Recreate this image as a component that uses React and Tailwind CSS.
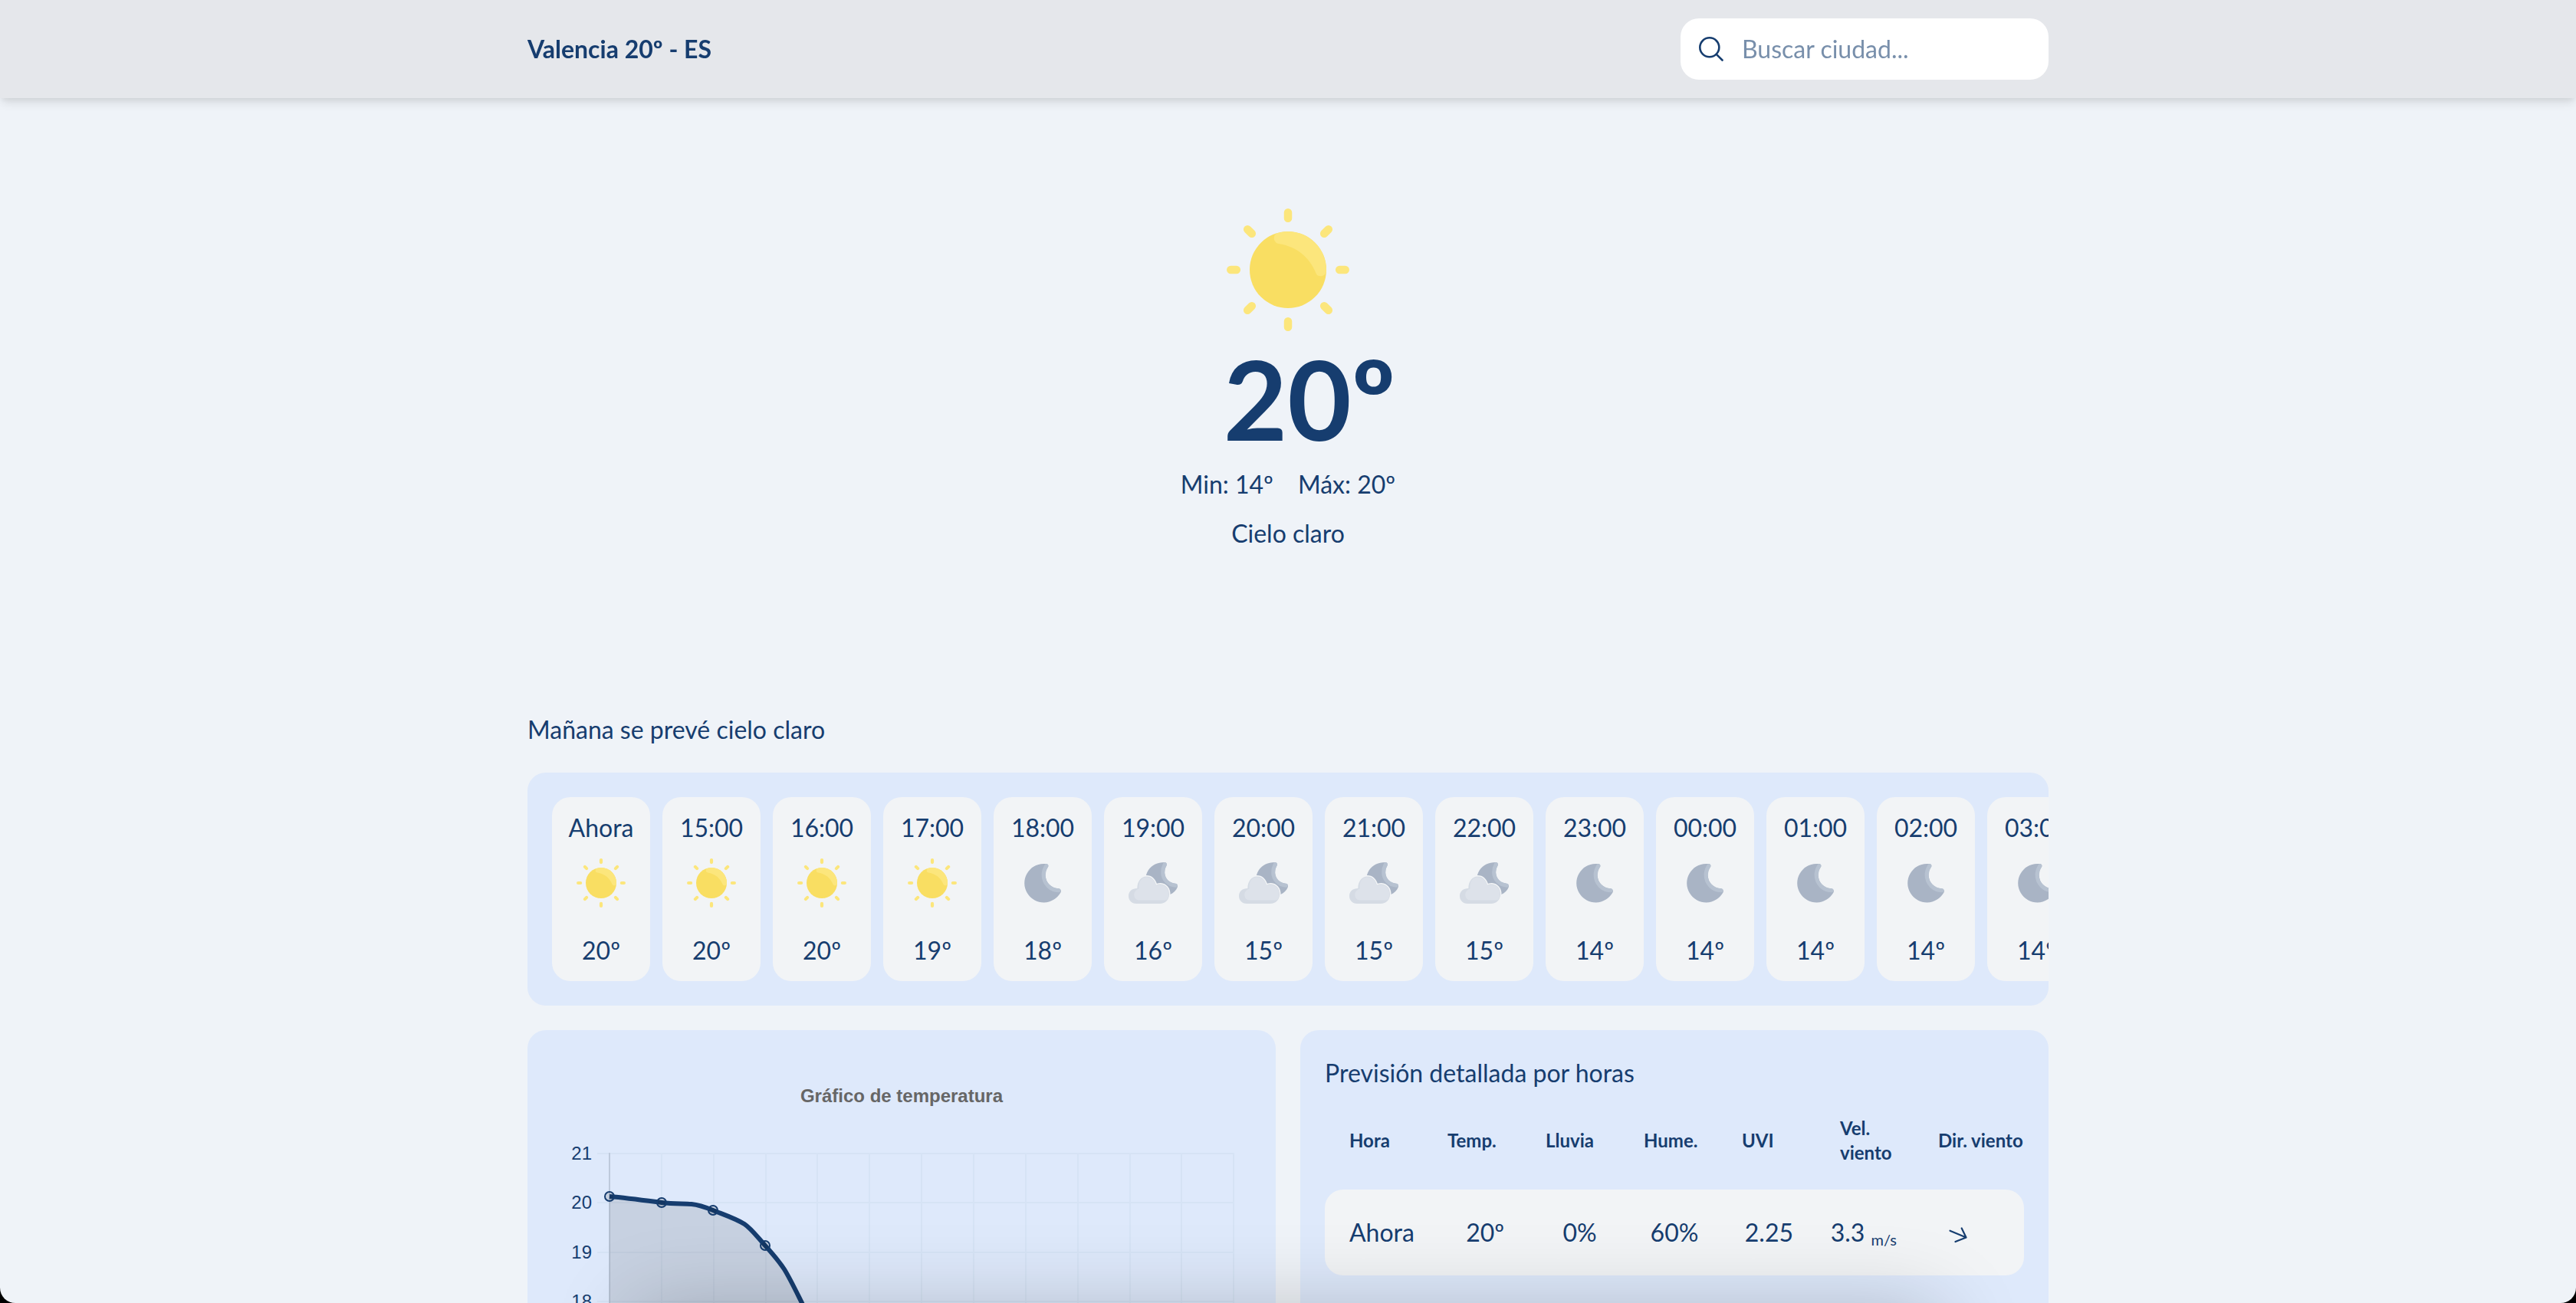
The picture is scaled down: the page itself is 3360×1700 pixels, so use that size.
import React from "react";

const hours = [
  { time: "Ahora", icon: "sun", temp: 20 },
  { time: "15:00", icon: "sun", temp: 20 },
  { time: "16:00", icon: "sun", temp: 20 },
  { time: "17:00", icon: "sun", temp: 19 },
  { time: "18:00", icon: "moon", temp: 18 },
  { time: "19:00", icon: "cloud", temp: 16 },
  { time: "20:00", icon: "cloud", temp: 15 },
  { time: "21:00", icon: "cloud", temp: 15 },
  { time: "22:00", icon: "cloud", temp: 15 },
  { time: "23:00", icon: "moon", temp: 14 },
  { time: "00:00", icon: "moon", temp: 14 },
  { time: "01:00", icon: "moon", temp: 14 },
  { time: "02:00", icon: "moon", temp: 14 },
  { time: "03:00", icon: "moon", temp: 14 },
];

function Sun({ className }) {
  return (
    <svg viewBox="0 0 160 160" className={className} aria-hidden="true">
      <g stroke="#fce67c" strokeWidth="10.5" strokeLinecap="round">
        <path d="M80 5.3V12.8M80 147.2V154.7M5.3 80H12.8M147.2 80H154.7" />
        <path d="M27.2 27.2L32.8 32.8M127.2 127.2L132.8 132.8M27.2 132.8L32.8 127.2M127.2 32.8L132.8 27.2" />
      </g>
      <circle cx="80" cy="80" r="50" fill="#f9de62" />
      <path
        d="M67.7 46C61 45 59.5 35.5 65.5 32.3A50 50 0 0 1 130 81C130 89 119 90.5 116.7 85C109 65 92 49.5 67.7 46Z"
        fill="#fce67c"
      />
    </svg>
  );
}

function Moon({ className }) {
  return (
    <svg viewBox="0 0 64 64" className={className} aria-hidden="true">
      <path
        d="M36.5 7C39 7 40.3 9.5 38.8 11.5C36.5 14.5 35.5 18 35.6 22C36 31.5 43 38.8 52 39.2C55.2 39.2 56.8 42 55.4 44.5A25.2 25.2 0 1 1 33 7Z"
        fill="#a9b4c5"
      />
      <path
        d="M36.8 9.6C34 14 33 18 33.1 22C33.5 33 42 41.4 53 41.8"
        fill="none"
        stroke="#b7c2d1"
        strokeWidth="5"
        strokeLinecap="round"
      />
    </svg>
  );
}

const cloudPath =
  "M10 59C4 59 0 54.5 0 49C0 43 4.5 39 11.3 39C11.5 30 16 23.5 23.5 23.5C30 23.5 34 28 36 35C37.5 34 39.5 33.4 42 33.6C48.5 34 53 39.5 53 46.5C53 54 48 59 41 59Z";

function MoonCloud({ className }) {
  return (
    <svg viewBox="0 0 64 64" className={className} aria-hidden="true">
      <path
        d="M46.5 5C49.5 5 50.7 7.5 49.3 10C47.6 13 46.9 16 47.1 19C47.6 26.5 53 32 60.5 32.7C63.5 33 64.6 35.3 63.7 37.8C62 42 58.5 45.5 54 47L30 44C21 36 20 24 26 15C30.5 8.5 38 5 46.5 5Z"
        fill="#a9b4c5"
      />
      <path
        d="M47.3 7.5C45 12 44.5 15.5 44.7 19C45.3 27.5 51.5 34.4 61.3 35.2"
        fill="none"
        stroke="#b7c2d1"
        strokeWidth="5"
        strokeLinecap="round"
      />
      <path d={cloudPath} fill="none" stroke="#f2f4f6" strokeWidth="3" />
      <path d={cloudPath} fill="#d5dbe4" />
      <path
        d="M14 54.5C9.5 54.5 7.3 51 7.3 47.5C7.3 43 10.5 40.5 13.5 39.5C12.5 30 17 24.5 23.5 24.5C30 24.5 34 29 36 35.5C37.5 34.8 39.5 34.4 42 34.6C48 35 52.3 39.5 52.3 46.5C52.3 49.5 51.4 52 50 54C46 54.8 43 54.5 40 54.5Z"
        fill="#dde2ea"
      />
    </svg>
  );
}

const icons = { sun: Sun, moon: Moon, cloud: MoonCloud };

const columns = Array.from({ length: 13 }, (_, i) => 75 + Math.round(i * 67.85));
const rows = [21, 20, 19, 18, 17, 16, 15, 14, 13].map((value, i) => ({
  value,
  y: 129 + Math.round(i * 64.25),
}));
const points = [
  [75, 185],
  [143, 193],
  [210, 203],
  [278, 249],
  [346, 372],
  [414, 450],
  [482, 480],
  [550, 500],
  [618, 515],
  [686, 540],
  [753, 560],
  [821, 570],
  [889, 580],
];
const curve =
  "M75 185C98 187 120 190 143 193C160 195 172 194 182 195C192 196 200 199 210 203C225 209 240 214 251 221C260 227 268 238 278 249C287 259 296 269 303 280C311 293 319 310 328 328L346 372C380 450 440 470 482 480S560 500 618 515S780 565 889 580";

function TemperatureChart() {
  return (
    <svg
      viewBox="0 0 912 680"
      className="block w-full"
      role="img"
      aria-label="Gráfico de temperatura"
      fontFamily='"Liberation Sans", Arial, sans-serif'
      fontSize="24"
    >
      <text x="456" y="62" textAnchor="middle" fontWeight="700" fill="#666666">
        Gráfico de temperatura
      </text>
      <g stroke="#d6e3f5" strokeWidth="2">
        {rows.map((row) => (
          <line key={row.value} x1="59" x2="889" y1={row.y} y2={row.y} />
        ))}
        {columns.map((x) => (
          <line key={x} x1={x} x2={x} y1="128" y2="644" />
        ))}
      </g>
      <line x1="75" x2="75" y1="128" y2="644" stroke="#becadc" strokeWidth="2" />
      {rows.map((row) => (
        <text key={row.value} x="52" y={row.y + 8} textAnchor="end" fill="#163d6f">
          {row.value}
        </text>
      ))}
      <path d={curve + "V643H75Z"} fill="#000000" fillOpacity="0.1" />
      <path d={curve} fill="none" stroke="#163d6f" strokeWidth="6" />
      {points.map(([x, y]) => (
        <circle
          key={x}
          cx={x}
          cy={y}
          r="6"
          fill="#000000"
          fillOpacity="0.1"
          stroke="#163d6f"
          strokeWidth="2"
        />
      ))}
    </svg>
  );
}

export default function App() {
  return (
    <div className="relative h-screen overflow-hidden bg-[#eff3f8] font-['Lato',sans-serif] text-[32px] leading-[48px] text-[#163d6f]">
      <div className="h-full overflow-y-auto [scrollbar-width:none]">
        <header className="sticky top-0 z-10 bg-[#e5e7eb] shadow-[0_8px_12px_-2px_rgba(0,0,0,0.1),0_4px_8px_-2px_rgba(0,0,0,0.06)]">
          <div className="mx-auto flex max-w-[2048px] items-center justify-between px-8 py-6">
            <h1 className="font-bold">Valencia 20º - ES</h1>
            <label className="flex h-20 w-[480px] items-center gap-6 rounded-3xl bg-white px-6">
              <svg viewBox="0 0 32 32" className="size-8 shrink-0" fill="none" stroke="currentColor" strokeWidth="2.6" strokeLinecap="round" aria-hidden="true">
                <circle cx="13.8" cy="13.8" r="12.5" />
                <path d="M22.8 22.8L30.5 30.5" />
              </svg>
              <input
                type="text"
                aria-label="Buscar ciudad"
                placeholder="Buscar ciudad..."
                className="w-full min-w-0 bg-transparent outline-none placeholder:text-[#788fab]"
              />
            </label>
          </div>
        </header>

        <main className="mx-auto max-w-[2048px] px-8 pb-8">
          <section className="flex flex-col items-center gap-4 pt-36 pb-52">
            <Sun className="size-40" />
            <p className="ml-14 text-[144px] leading-none font-bold">20º</p>
            <div className="flex gap-8">
              <p>Min: 14º</p>
              <p>Máx: 20º</p>
            </div>
            <p>Cielo claro</p>
          </section>

          <h2 className="mb-8">Mañana se prevé cielo claro</h2>

          <ul className="mb-8 flex gap-4 overflow-x-auto rounded-3xl bg-[#dee9fb] p-8 [scrollbar-width:none]">
            {hours.map((hour) => {
              const Icon = icons[hour.icon];
              return (
                <li key={hour.time} className="flex w-32 shrink-0 flex-col items-center rounded-3xl bg-[#f2f4f6] py-4">
                  <span>{hour.time}</span>
                  <Icon className="mt-4 mb-8 size-16" />
                  <span>{hour.temp}º</span>
                </li>
              );
            })}
          </ul>

          <div className="grid grid-cols-2 gap-8">
            <section className="rounded-3xl bg-[#dee9fb] p-8">
              <TemperatureChart />
            </section>

            <section className="rounded-3xl bg-[#dee9fb] p-8">
              <h2 className="mb-8">Previsión detallada por horas</h2>
              <table className="block">
                <thead className="block">
                  <tr className="mb-8 grid grid-cols-[repeat(6,96px)_1fr] items-center gap-8 pl-8 text-left text-2xl">
                    <th>Hora</th>
                    <th>Temp.</th>
                    <th>Lluvia</th>
                    <th>Hume.</th>
                    <th>UVI</th>
                    <th>Vel. viento</th>
                    <th className="whitespace-nowrap">Dir. viento</th>
                  </tr>
                </thead>
                <tbody className="block">
                  <tr className="grid grid-cols-7 items-center gap-4 rounded-3xl bg-[#f2f4f6] p-8 text-center">
                    <td className="text-left">Ahora</td>
                    <td>20º</td>
                    <td>0%</td>
                    <td>60%</td>
                    <td>2.25</td>
                    <td className="whitespace-nowrap">
                      3.3 <sub className="text-[20px]">m/s</sub>
                    </td>
                    <td>
                      <svg viewBox="0 0 32 32" className="mx-auto size-8" fill="none" stroke="currentColor" strokeWidth="2.2" strokeLinecap="round" strokeLinejoin="round" role="img" aria-label="Sureste">
                        <path d="M5.5 13.7L26.5 22.5M20.7 10.5L26.5 22.5L12.5 28" />
                      </svg>
                    </td>
                  </tr>
                </tbody>
              </table>
            </section>
          </div>
        </main>
      </div>

      <div className="pointer-events-none absolute inset-x-[830px] top-full z-20 mt-2 h-40 shadow-[0_0_110px_rgba(0,0,0,0.22)]" />
      <div className="pointer-events-none absolute inset-0 z-30 rounded-b-[20px] shadow-[0_0_0_20px_#000000]" />
    </div>
  );
}
